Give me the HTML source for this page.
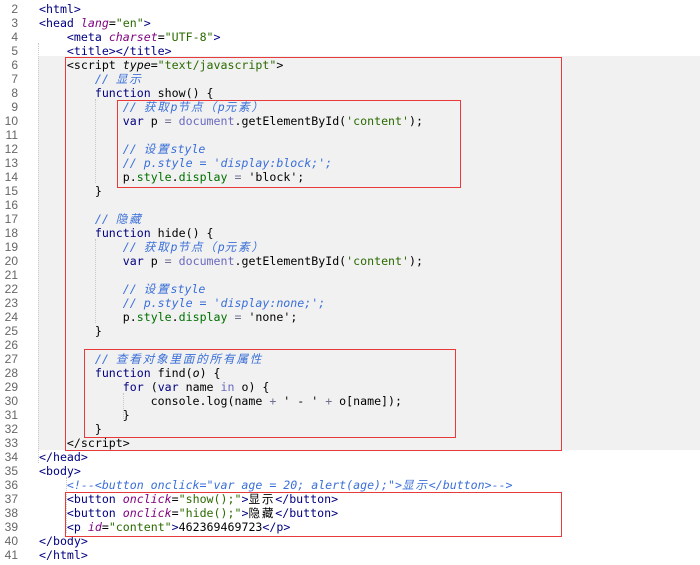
<!DOCTYPE html>
<html><head><meta charset="utf-8"><style>
html,body{margin:0;padding:0;background:#fff;width:700px;height:565px;overflow:hidden;position:relative}
.bg{position:absolute;left:38px;top:56px;width:662px;height:394px;background:#f1f1f1}
.l{position:absolute;left:39px;height:14px;line-height:14px;white-space:pre;font-family:"DejaVu Sans Mono","Noto Sans CJK SC",monospace;font-size:11.6px;color:#000}
.n{position:absolute;left:0;width:18px;text-align:right;height:14px;line-height:14px;font-family:"Liberation Sans",sans-serif;font-size:12px;color:#666}
.t{color:#000080}.a{color:#7f007f;font-style:italic}.s{color:#2a6a00}.c{color:#3a6fd8;font-style:italic}
.k{color:#000080}.d{color:#6a6ac0}.g{color:#007000}.o{color:#6f6f8f}
.z{font-family:"Noto Sans CJK SC",sans-serif;letter-spacing:1.8px}
.r{position:absolute;border:1px solid #e83a3a;box-sizing:border-box}
.gd{position:absolute;border-left:1px dotted #c8c8c8;width:0}
</style></head><body>
<div class="bg"></div>
<div class="gd" style="left:38px;top:43px;height:420px"></div>
<div class="gd" style="left:95px;top:99px;height:84px"></div>
<div class="gd" style="left:95px;top:239px;height:84px"></div>
<div class="gd" style="left:123px;top:393px;height:28px"></div>
<div class="gd" style="left:66px;top:477px;height:56px"></div>

<div class="n" style="top:2px">2</div><div class="l" style="top:2px"><span class="t">&lt;html&gt;</span></div>
<div class="n" style="top:16px">3</div><div class="l" style="top:16px"><span class="t">&lt;head </span><span class="a">lang</span>=<span class="s">"en"</span><span class="t">&gt;</span></div>
<div class="n" style="top:30px">4</div><div class="l" style="top:30px">    <span class="t">&lt;meta </span><span class="a">charset</span>=<span class="s">"UTF-8"</span><span class="t">&gt;</span></div>
<div class="n" style="top:44px">5</div><div class="l" style="top:44px">    <span class="t">&lt;title&gt;&lt;/title&gt;</span></div>
<div class="n" style="top:58px">6</div><div class="l" style="top:58px">    &lt;script <span class="a" style="color:#000">type</span>=<span class="s">"text/javascript"</span>&gt;</div>
<div class="n" style="top:72px">7</div><div class="l" style="top:72px">        <span class="c">// <span class="z">显示</span></span></div>
<div class="n" style="top:86px">8</div><div class="l" style="top:86px">        <span class="k">function</span> show() {</div>
<div class="n" style="top:100px">9</div><div class="l" style="top:100px">            <span class="c">// <span class="z">获取</span>p<span class="z">节点（</span>p<span class="z">元素）</span></span></div>
<div class="n" style="top:114px">10</div><div class="l" style="top:114px">            <span class="k">var</span> p <span class="o">=</span> <span class="d">document</span>.getElementById(<span class="s">'content'</span>);</div>
<div class="n" style="top:128px">11</div>
<div class="n" style="top:142px">12</div><div class="l" style="top:142px">            <span class="c">// <span class="z">设置</span>style</span></div>
<div class="n" style="top:156px">13</div><div class="l" style="top:156px">            <span class="c">// p.style = 'display:block;';</span></div>
<div class="n" style="top:170px">14</div><div class="l" style="top:170px">            p.<span class="g">style</span>.<span class="g">display</span> <span class="o">=</span> 'block';</div>
<div class="n" style="top:184px">15</div><div class="l" style="top:184px">        }</div>
<div class="n" style="top:198px">16</div>
<div class="n" style="top:212px">17</div><div class="l" style="top:212px">        <span class="c">// <span class="z">隐藏</span></span></div>
<div class="n" style="top:226px">18</div><div class="l" style="top:226px">        <span class="k">function</span> hide() {</div>
<div class="n" style="top:240px">19</div><div class="l" style="top:240px">            <span class="c">// <span class="z">获取</span>p<span class="z">节点（</span>p<span class="z">元素）</span></span></div>
<div class="n" style="top:254px">20</div><div class="l" style="top:254px">            <span class="k">var</span> p <span class="o">=</span> <span class="d">document</span>.getElementById(<span class="s">'content'</span>);</div>
<div class="n" style="top:268px">21</div>
<div class="n" style="top:282px">22</div><div class="l" style="top:282px">            <span class="c">// <span class="z">设置</span>style</span></div>
<div class="n" style="top:296px">23</div><div class="l" style="top:296px">            <span class="c">// p.style = 'display:none;';</span></div>
<div class="n" style="top:310px">24</div><div class="l" style="top:310px">            p.<span class="g">style</span>.<span class="g">display</span> <span class="o">=</span> 'none';</div>
<div class="n" style="top:324px">25</div><div class="l" style="top:324px">        }</div>
<div class="n" style="top:338px">26</div>
<div class="n" style="top:352px">27</div><div class="l" style="top:352px">        <span class="c">// <span class="z">查看对象里面的所有属性</span></span></div>
<div class="n" style="top:366px">28</div><div class="l" style="top:366px">        <span class="k">function</span> find(<span style="font-style:italic">o</span>) {</div>
<div class="n" style="top:380px">29</div><div class="l" style="top:380px">            <span class="k">for</span> (<span class="k">var</span> name <span class="d">in</span> o) {</div>
<div class="n" style="top:394px">30</div><div class="l" style="top:394px">                console.log(name <span class="o">+</span> ' - ' <span class="o">+</span> o[name]);</div>
<div class="n" style="top:408px">31</div><div class="l" style="top:408px">            }</div>
<div class="n" style="top:422px">32</div><div class="l" style="top:422px">        }</div>
<div class="n" style="top:436px">33</div><div class="l" style="top:436px">    &lt;/script&gt;</div>
<div class="n" style="top:450px">34</div><div class="l" style="top:450px"><span class="t">&lt;/head&gt;</span></div>
<div class="n" style="top:464px">35</div><div class="l" style="top:464px"><span class="t">&lt;body&gt;</span></div>
<div class="n" style="top:478px">36</div><div class="l" style="top:478px">    <span class="c">&lt;!--&lt;button onclick="var age = 20; alert(age);"&gt;<span class="z">显示</span>&lt;/button&gt;--&gt;</span></div>
<div class="n" style="top:492px">37</div><div class="l" style="top:492px">    <span class="t">&lt;button </span><span class="a">onclick</span>=<span class="s">"show();"</span><span class="t">&gt;</span><span class="z">显示</span><span class="t">&lt;/button&gt;</span></div>
<div class="n" style="top:506px">38</div><div class="l" style="top:506px">    <span class="t">&lt;button </span><span class="a">onclick</span>=<span class="s">"hide();"</span><span class="t">&gt;</span><span class="z">隐藏</span><span class="t">&lt;/button&gt;</span></div>
<div class="n" style="top:520px">39</div><div class="l" style="top:520px">    <span class="t">&lt;p </span><span class="a">id</span>=<span class="s">"content"</span><span class="t">&gt;</span>462369469723<span class="t">&lt;/p&gt;</span></div>
<div class="n" style="top:534px">40</div><div class="l" style="top:534px"><span class="t">&lt;/body&gt;</span></div>
<div class="n" style="top:548px">41</div><div class="l" style="top:548px"><span class="t">&lt;/html&gt;</span></div>

<div class="r" style="left:65px;top:57px;width:497px;height:394px"></div>
<div class="r" style="left:117px;top:100px;width:344px;height:88px"></div>
<div class="r" style="left:84px;top:349px;width:372px;height:89px"></div>
<div class="r" style="left:65px;top:492px;width:497px;height:45px"></div>
</body></html>
